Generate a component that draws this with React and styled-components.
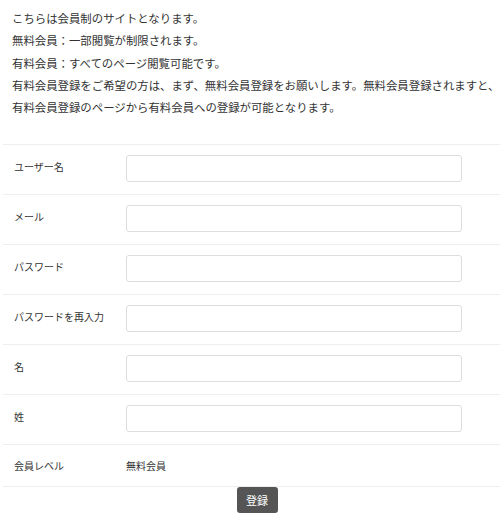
import React from 'react';
import styled, { createGlobalStyle } from 'styled-components';

const GlobalStyle = createGlobalStyle`
  body {
    margin: 0;
    background: #ffffff;
    font-family: "Noto Sans CJK JP", "Noto Sans", sans-serif;
    color: #333333;
  }
`;

const Page = styled.div`
  padding: 7px 0 0 3px;
`;

const Intro = styled.div`
  padding-left: 9px;
  font-size: 11.4px;
  line-height: 22.3px;
  color: #333;
  margin-bottom: 26px;

  p {
    margin: 0;
    white-space: nowrap;
  }
`;

const Form = styled.form`
  width: 497px;
`;

const Row = styled.div`
  display: flex;
  align-items: center;
  height: ${p => (p.short ? '41px' : '49px')};
  border-top: 1px solid #eeeeee;
  border-bottom: ${p => (p.last ? '1px solid #eeeeee' : 'none')};
`;

const Label = styled.label`
  width: 112px;
  padding-left: 11px;
  padding-bottom: ${p => (p.flat ? '0' : '7px')};
  font-size: 10px;
  color: #333;
`;

const Field = styled.input`
  box-sizing: border-box;
  width: 336px;
  height: 27px;
  margin-bottom: 2px;
  border: 1px solid #dddddd;
  border-radius: 3px;
  background: #fff;
  outline: none;
`;

const Value = styled.span`
  font-size: 10px;
  color: #333;
`;

const Actions = styled.div`
  display: flex;
  justify-content: center;
  padding-left: 11px;
`;

const Submit = styled.button`
  width: 41px;
  height: 26px;
  padding: 0;
  border: none;
  border-radius: 3px;
  background: #555555;
  color: #ffffff;
  font-family: "Noto Sans CJK JP", sans-serif;
  font-size: 11px;
`;

const fields = [
  { label: 'ユーザー名', type: 'text' },
  { label: 'メール', type: 'email' },
  { label: 'パスワード', type: 'password' },
  { label: 'パスワードを再入力', type: 'password' },
  { label: '名', type: 'text' },
  { label: '姓', type: 'text' },
];

export default function App() {
  return (
    <Page>
      <GlobalStyle />
      <Intro>
        <p>こちらは会員制のサイトとなります。</p>
        <p>無料会員：一部閲覧が制限されます。</p>
        <p>有料会員：すべてのページ閲覧可能です。</p>
        <p>有料会員登録をご希望の方は、まず、無料会員登録をお願いします。無料会員登録されますと、</p>
        <p>有料会員登録のページから有料会員への登録が可能となります。</p>
      </Intro>
      <Form onSubmit={e => e.preventDefault()}>
        {fields.map(f => (
          <Row key={f.label}>
            <Label>{f.label}</Label>
            <Field type={f.type} />
          </Row>
        ))}
        <Row short last>
          <Label flat>会員レベル</Label>
          <Value>無料会員</Value>
        </Row>
        <Actions>
          <Submit type="submit">登録</Submit>
        </Actions>
      </Form>
    </Page>
  );
}
